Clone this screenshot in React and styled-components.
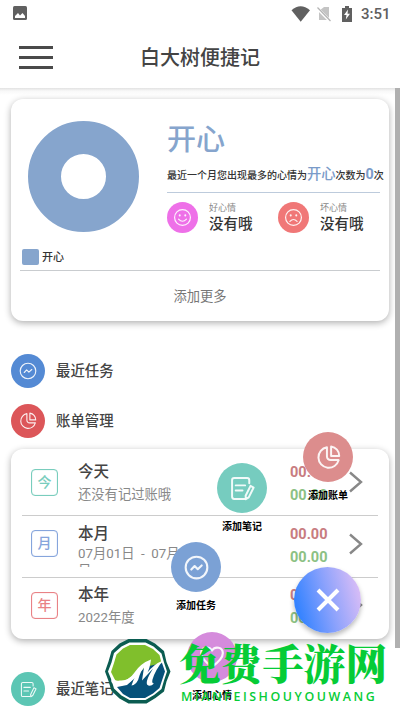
import styled, { createGlobalStyle } from "styled-components";

const GlobalStyle = createGlobalStyle`
  * {
    box-sizing: border-box;
  }
  body {
    margin: 0;
    background-color: #ffffff;
    color: #444444;
    font-family: Roboto, "Noto Sans CJK SC", sans-serif;
  }
  p, h1, h2 {
    margin: 0;
    white-space: nowrap;
  }
`;

const Phone = styled.div`
  position: relative;
  width: 400px;
  height: 711px;
  overflow: hidden;
  display: flex;
  flex-direction: column;
`;
const StatusBar = styled.div`
  height: 28px;
  flex-shrink: 0;
  padding: 0 10px 0 13px;
  display: flex;
  align-items: center;
  justify-content: space-between;
`;
const PhotoIcon = styled.svg`
  width: 14px;
  height: 14px;
  margin-bottom: 2px;
`;
const StatusIcons = styled.div`
  display: flex;
  align-items: center;
`;
const Clock = styled.span`
  width: 29px;
  margin-left: 8px;
  font-size: 15px;
  line-height: 28px;
  font-weight: 500;
  color: #606060;
`;
const Header = styled.header`
  height: 60px;
  flex-shrink: 0;
  padding: 0 19px 2px;
  display: grid;
  grid-template-columns: 34px 1fr 34px;
  align-items: center;
`;
const Burger = styled.div`
  display: flex;
  flex-direction: column;
  gap: 7px;
  span {
    height: 3px;
    background-color: #4a4a4a;
  }
`;
const Title = styled.h1`
  padding-top: 2px;
  font-size: 20px;
  line-height: 30px;
  font-weight: 500;
  text-align: center;
`;
const Body = styled.main`
  display: flex;
  flex: 1;
  min-height: 0;
  background: linear-gradient(#e2e2e2, #f8f8f8 3px, #ffffff 7px);
`;
const Content = styled.div`
  width: 395px;
  padding: 11px 6px 0 11px;
`;
const Scrollbar = styled.div`
  width: 5px;
  height: 560px;
  background-color: #b0b0b0;
`;
const Card = styled.section`
  border-radius: 12px;
  background-color: #ffffff;
  box-shadow: 0 2px 7px rgba(0, 0, 0, 0.32);
`;
const MoodCard = styled(Card)`
  height: 222px;
  padding: 22px 9px 0;
`;
const MoodTop = styled.div`
  height: 150px;
  border-bottom: 1px solid #c9cccf;
  display: flex;
  justify-content: space-between;
`;
const ChartSide = styled.div`
  width: 140px;
  padding-left: 2px;
`;
const Donut = styled.div`
  width: 111px;
  height: 111px;
  margin-left: 6px;
  border: 33px solid #86a5cd;
  border-radius: 50%;
`;
const Legend = styled.div`
  margin-top: 16px;
  display: flex;
  align-items: center;
  gap: 3px;
  i {
    width: 17px;
    height: 16px;
    border-radius: 2px;
    background-color: #86a5cd;
  }
  p {
    padding-top: 2px;
    font-size: 11px;
    line-height: 16px;
    font-weight: 500;
    color: #333333;
  }
`;
const MoodSide = styled.div`
  width: 213px;
`;
const MoodName = styled.h2`
  padding-top: 3px;
  font-size: 29px;
  line-height: 32px;
  font-weight: 500;
  color: #86a5cd;
`;
const MoodText = styled.p`
  height: 37px;
  border-bottom: 1px solid #bdcbdc;
  font-size: 10px;
  line-height: 40px;
  font-weight: 500;
  color: #333333;
  b {
    font-size: 14.3px;
    font-weight: 500;
    line-height: 1;
    color: #7a9bc9;
  }
  b:last-child {
    font-weight: 700;
  }
`;
const Moods = styled.div`
  display: flex;
  padding-top: 9px;
`;
const Mood = styled.div`
  width: 111px;
  flex-shrink: 0;
  display: flex;
  gap: 11px;
`;
const Dot = styled.div`
  width: ${(props) => props.$size}px;
  height: ${(props) => props.$size}px;
  flex-shrink: 0;
  border-radius: 50%;
  background-color: ${(props) => props.$color};
  display: flex;
  align-items: center;
  justify-content: center;
`;
const MoodLabel = styled.p`
  font-size: 9px;
  line-height: 13px;
  color: #888888;
`;
const MoodValue = styled.p`
  font-size: 14.5px;
  line-height: 20px;
  font-weight: 500;
  color: #333333;
`;
const More = styled.p`
  font-size: 13.3px;
  line-height: 52px;
  text-align: center;
  color: #777777;
`;
const SectionTitle = styled.div`
  height: 34px;
  margin-top: ${(props) => props.$top}px;
  display: flex;
  align-items: center;
  gap: 11px;
  p {
    padding-top: 2px;
    font-size: 14.4px;
    line-height: 20px;
    font-weight: 500;
  }
`;
const BillCard = styled(Card)`
  height: 190px;
  margin-top: 11px;
  padding: 0 11px;
`;
const Bill = styled.div`
  height: ${(props) => props.$height}px;
  padding-top: ${(props) => props.$top}px;
  border-bottom: ${(props) => (props.$last ? "none" : "1px solid #cccccc")};
  display: flex;
`;
const Badge = styled.div`
  width: 27px;
  height: 27px;
  margin: ${(props) => props.$top}px 20px 0 9px;
  flex-shrink: 0;
  border: 1px solid ${(props) => props.$color};
  box-shadow: inset 0 0 1px ${(props) => props.$color};
  border-radius: 4px;
  color: ${(props) => props.$color};
  font-size: 14px;
  line-height: 25px;
  font-weight: 500;
  text-align: center;
`;
const BillText = styled.div`
  width: 212px;
`;
const BillTitle = styled.p`
  font-size: 15.5px;
  line-height: 22px;
  font-weight: 500;
`;
const BillDate = styled.p`
  margin-top: 2px;
  font-size: 13.3px;
  line-height: 20px;
  color: #888888;
`;
// the month range wraps, and its second line is cut by the row height
const BillRange = styled(BillDate)`
  width: 120px;
  height: 22px;
  overflow: hidden;
  white-space: pre-wrap;
  word-break: break-all;
  margin-top: 0;
  line-height: 17px;
`;
const Amounts = styled.div`
  width: 59px;
  font-size: 14.5px;
  line-height: 23px;
  font-weight: 700;
`;
const Amount = styled.p`
  color: ${(props) => props.$color};
`;
const Chevron = styled.svg`
  width: 14px;
  height: 22px;
  margin-top: 10px;
`;
const Action = styled.div`
  position: absolute;
  left: ${(props) => props.$x}px;
  top: ${(props) => props.$y}px;
  width: 50px;
  display: flex;
  flex-direction: column;
  align-items: center;
`;
const ActionLabel = styled.p`
  margin-top: 7px;
  font-size: 10px;
  line-height: 14px;
  font-weight: 700;
  color: #000000;
`;
const Fab = styled.button`
  position: absolute;
  left: 294px;
  top: 567px;
  width: 67px;
  height: 66px;
  padding: 0;
  border: none;
  border-radius: 50%;
  background: linear-gradient(75deg, #3583ff 12%, #8ca2fc 52%, #d9bdf6 92%);
  box-shadow: 0 3px 5px rgba(0, 0, 0, 0.28);
  display: flex;
  align-items: center;
  justify-content: center;
`;
const Logo = styled.svg`
  position: absolute;
  left: 100px;
  top: 634px;
  width: 76px;
  height: 74px;
`;
const Watermark = styled.div`
  position: absolute;
  left: 181px;
  top: 637px;
  color: #06cc36;
`;
const WatermarkName = styled.p`
  margin-left: -2px;
  font-family: "Noto Serif CJK SC", "Noto Sans CJK SC", serif;
  font-size: 41.6px;
  line-height: 50px;
  font-weight: 900;
`;
const WatermarkPinyin = styled.p`
  padding-top: 1px;
  font-family: "Open Sans", sans-serif;
  font-size: 12.4px;
  line-height: 18px;
  font-weight: 600;
  letter-spacing: 2.55px;
`;

function Icon({ size, width = 1.5, children }) {
  return (
    <svg
      width={size}
      height={size}
      viewBox="0 0 24 24"
      fill="none"
      stroke="#ffffff"
      strokeOpacity="0.9"
      strokeWidth={width}
      strokeLinecap="round"
      strokeLinejoin="round"
    >
      {children}
    </svg>
  );
}

function FaceIcon({ sad }) {
  return (
    <Icon size={19}>
      <circle cx="12" cy="12" r="10" />
      <path d={sad ? "M7.5 17q4.5-5 9 0" : "M7 14q5 5.5 10 0"} />
      <path d="M8.5 9v.5M15.5 9v.5" strokeWidth="2.5" />
    </Icon>
  );
}

function TaskIcon(props) {
  return (
    <Icon {...props}>
      <circle cx="12" cy="12" r="10.4" />
      <path d="M7 14l3.2-3.4 3 3L17 10" />
    </Icon>
  );
}

function PieIcon(props) {
  return (
    <Icon {...props}>
      <path d="M10.500 2.200A9.900 9.900 0 1 0 21.800 14.500H14a3.500 3.500 0 0 1-3.500-3.500z" />
      <path d="M14.500 1.500V10.500h7.800a9 9 0 0 0-7.800-9z" />
    </Icon>
  );
}

function NoteIcon(props) {
  return (
    <Icon {...props}>
      <path d="M18.500 7V4a2 2 0 0 0-2-2H4a2 2 0 0 0-2 2v16a2 2 0 0 0 2 2h10" />
      <path d="M5.500 9h9M5.500 14h6.500" />
      <path d="M19.700 9.500l3 1.600-4.700 9.400-2.800 1.700-.2-3.300z" />
    </Icon>
  );
}

const bills = [
  { mark: "今", color: "#79cdbd", title: "今天", date: "还没有记过账哦", height: 67, top: 12, badge: 8 },
  { mark: "月", color: "#86a5dc", title: "本月", date: "07月01日  -  07月31日", height: 62, top: 7, badge: 7, range: true },
  { mark: "年", color: "#e98286", title: "本年", date: "2022年度", height: 61, top: 6, badge: 8, last: true },
];

export default function App() {
  return (
    <Phone>
      <GlobalStyle />
      <StatusBar>
        <PhotoIcon viewBox="0 0 14 14">
          <rect width="14" height="14" rx="1.5" fill="#606060" />
          <path d="M2 12V10l3-3 2 2.5L9.5 7l2.5 3v2z" fill="#fff" />
        </PhotoIcon>
        <StatusIcons>
          <svg width="62" height="16" viewBox="0 0 62 16">
            <path d="M.5 4.200Q9.500-3.500 19 4.200L9.700 15.800z" fill="#606060" />
            <path d="M28 5l5-4h5v13H28z" fill="#c4c4c4" />
            <path d="M26 2l14 14" stroke="#fff" strokeWidth="3" />
            <path d="M26.5 1.5l13 13.5" stroke="#b4b4b4" strokeWidth="1.2" />
            <path d="M51 2h3V0h4v2h3v14H51z" fill="#606060" />
            <path d="M57 3.500L53 9h2.500l-.7 4.500L59 7.700h-2.500z" fill="#fff" />
          </svg>
          <Clock>3:51</Clock>
        </StatusIcons>
      </StatusBar>
      <Header>
        <Burger>
          <span />
          <span />
          <span />
        </Burger>
        <Title>白大树便捷记</Title>
      </Header>

      <Body>
        <Content>
          <MoodCard>
            <MoodTop>
              <ChartSide>
                <Donut />
                <Legend>
                  <i />
                  <p>开心</p>
                </Legend>
              </ChartSide>
              <MoodSide>
                <MoodName>开心</MoodName>
                <MoodText>
                  最近一个月您出现最多的心情为<b>开心</b>次数为<b>0</b>次
                </MoodText>
                <Moods>
                  <Mood>
                    <Dot $size={31} $color="#ee70e8">
                      <FaceIcon />
                    </Dot>
                    <div>
                      <MoodLabel>好心情</MoodLabel>
                      <MoodValue>没有哦</MoodValue>
                    </div>
                  </Mood>
                  <Mood>
                    <Dot $size={31} $color="#f07777">
                      <FaceIcon sad />
                    </Dot>
                    <div>
                      <MoodLabel>坏心情</MoodLabel>
                      <MoodValue>没有哦</MoodValue>
                    </div>
                  </Mood>
                </Moods>
              </MoodSide>
            </MoodTop>
            <More>添加更多</More>
          </MoodCard>

          <SectionTitle $top={33}>
            <Dot $size={34} $color="#548ad4">
              <TaskIcon size={18} />
            </Dot>
            <p>最近任务</p>
          </SectionTitle>
          <SectionTitle $top={16}>
            <Dot $size={34} $color="#dc5659">
              <PieIcon size={18} />
            </Dot>
            <p>账单管理</p>
          </SectionTitle>

          <BillCard>
            {bills.map((bill) => (
              <Bill key={bill.mark} $height={bill.height} $top={bill.top} $last={bill.last}>
                <Badge $color={bill.color} $top={bill.badge}>
                  {bill.mark}
                </Badge>
                <BillText>
                  <BillTitle>{bill.title}</BillTitle>
                  {bill.range ? (
                    <BillRange>{bill.date}</BillRange>
                  ) : (
                    <BillDate>{bill.date}</BillDate>
                  )}
                </BillText>
                <Amounts>
                  <Amount $color="#c87c80">00.00</Amount>
                  <Amount $color="#8cc183">00.00</Amount>
                </Amounts>
                <Chevron viewBox="0 0 14 22" fill="none" stroke="#888" strokeWidth="2.4">
                  <path d="M1 1.5L12 11 1 20.500" />
                </Chevron>
              </Bill>
            ))}
          </BillCard>

          <SectionTitle $top={33}>
            <Dot $size={34} $color="#5cc6b4">
              <NoteIcon size={17} />
            </Dot>
            <p>最近笔记</p>
          </SectionTitle>
        </Content>
        <Scrollbar />
      </Body>

      <Action $x={303} $y={432}>
        <Dot $size={50} $color="#dc8d8d">
          <PieIcon size={25} width={1.9} />
        </Dot>
        <ActionLabel>添加账单</ActionLabel>
      </Action>
      <Action $x={217} $y={463}>
        <Dot $size={50} $color="#76ccbf">
          <NoteIcon size={25} width={1.9} />
        </Dot>
        <ActionLabel>添加笔记</ActionLabel>
      </Action>
      <Action $x={171} $y={542}>
        <Dot $size={50} $color="#7ba1d5">
          <TaskIcon size={25} width={2} />
        </Dot>
        <ActionLabel>添加任务</ActionLabel>
      </Action>
      <Action $x={187} $y={632}>
        <Dot $size={50} $color="#d58bdc">
          <Icon size={26} width={2}>
            <path d="M12 21C5 16 2 12.500 2 8.500 2 3 9 1.500 12 6c3-4.500 10-3 10 2.500 0 4-3 7.500-10 12.500z" />
          </Icon>
        </Dot>
        <ActionLabel>添加心情</ActionLabel>
      </Action>
      <Fab>
        <svg width="24" height="24" viewBox="0 0 24 24" stroke="#fff" strokeWidth="4">
          <path d="M2 2l20 20M22 2L2 22" />
        </svg>
      </Fab>

      <Logo viewBox="0 0 76 74">
        <path
          d="M28.500 5h18l8.500 4.500 9 7.500 2.500 11 4 9.500-4 10-2.500 10-8.500 6.500-9 5.500h-18l-9-5-8-7.500-3-10-3.500-9.500 3.500-10 3-10.500 8-7.500z"
          fill="#0b5c51"
        />
        <path
          d="M29.500 8.500h16l8 4 8 7 2.500 9 3 9-3 9-2.500 8.500-7.500 6-8.500 5h-16l-8-4.500-7.500-7-2.500-8.500-3.500-8.500 3.500-9 2.500-9.500 7.500-6.500z"
          fill="#fff"
        />
        <path
          d="M30 11h15l8 4 6.500 6 2 8-18 6-22 14H16l-1-3-4-8 3-9 2.500-8.500 6.500-6z"
          fill="#80bf2c"
        />
        <path
          d="M62 29l3 8.500-3 9-2.500 7.500-6.500 5.500-8 4.500H30l-7-4-6-7 10-2 9-8 9-10z"
          fill="#07517a"
        />
        <path
          d="M12.500 43q3 5 7 3.500 9 1 15-8Q41 29 51 25.500q-1 8-3.500 13Q54 30 63 26.500q-8 10-10.500 19-1 4 1.500 4-4 4-7 1-1-3 2-9l4-7-11 12 2-13q-3 3-4.500 8-2 9-8 10 2-7 5-11-5 8-11 10-8 2-12-.5-4-2-1-7z"
          fill="#fff"
        />
      </Logo>
      <Watermark>
        <WatermarkName>免费手游网</WatermarkName>
        <WatermarkPinyin>MIANFEISHOUYOUWANG</WatermarkPinyin>
      </Watermark>
    </Phone>
  );
}
